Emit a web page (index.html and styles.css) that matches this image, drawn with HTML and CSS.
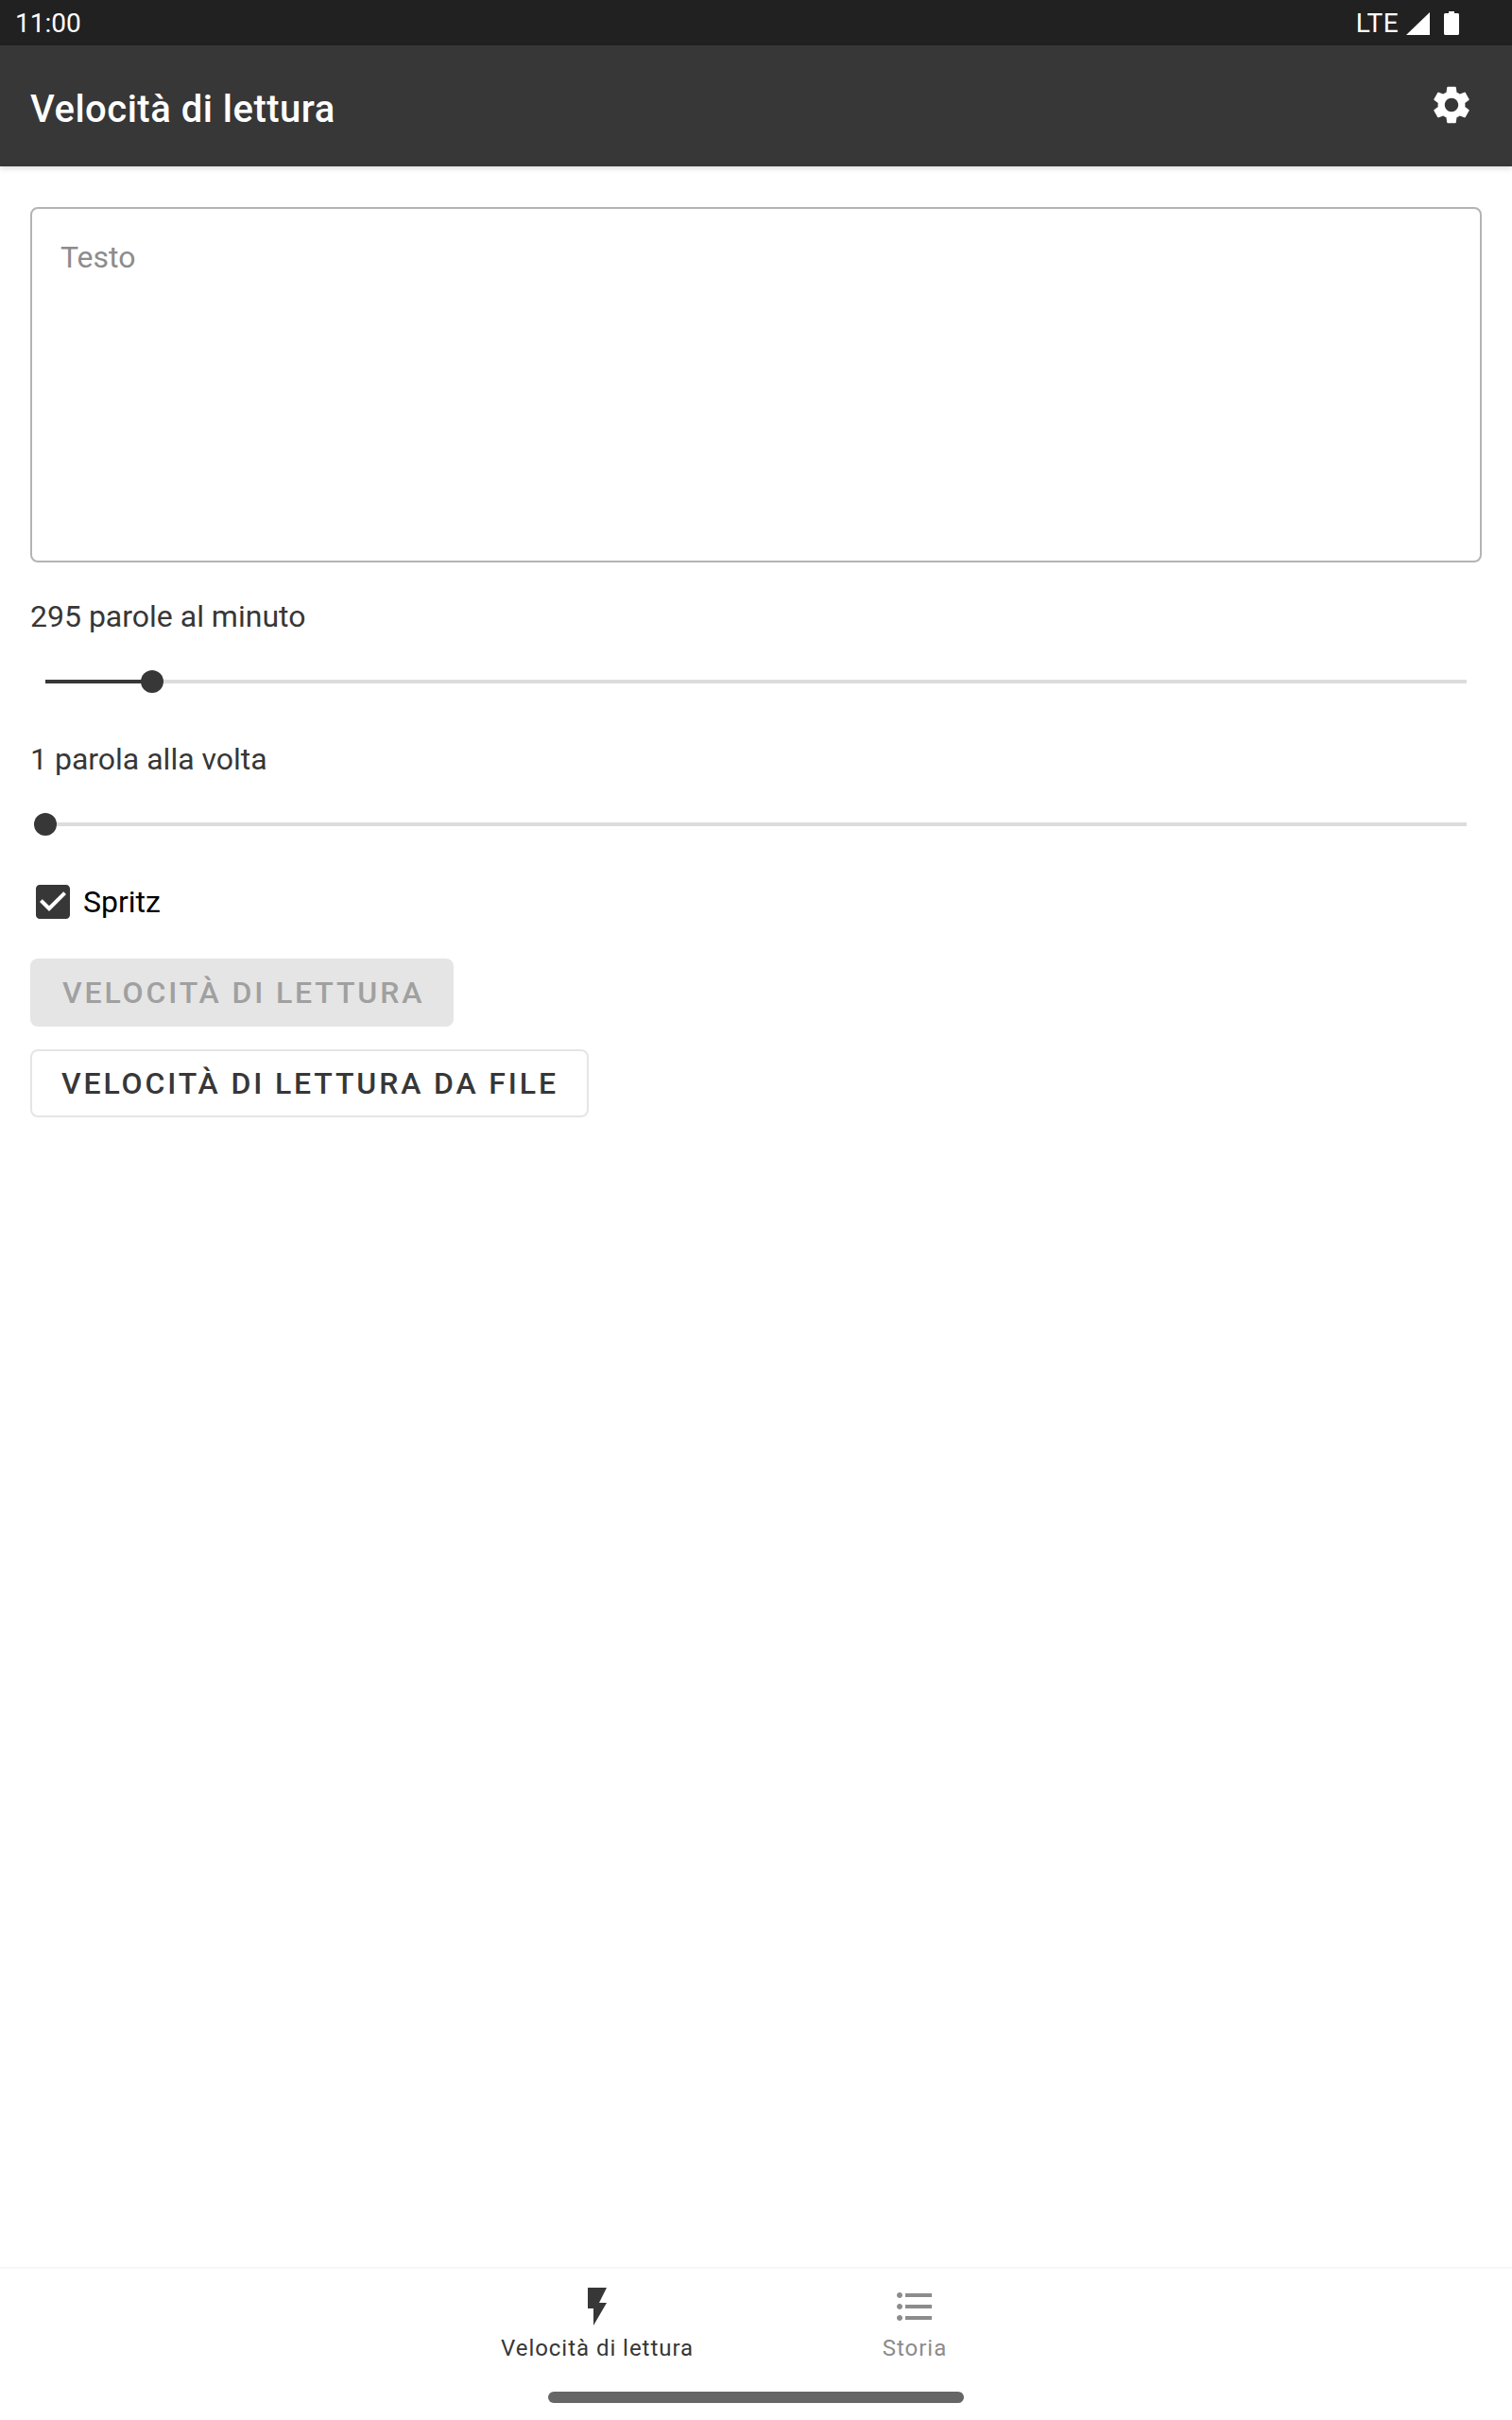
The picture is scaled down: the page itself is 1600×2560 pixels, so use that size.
FILE: index.html
```html
<!DOCTYPE html>
<html lang="it">
<head>
    <meta charset="UTF-8">
    <meta name="viewport" content="width=device-width, initial-scale=1.0">
    <title>Velocità di lettura</title>
    <link rel="stylesheet" href="styles.css">
</head>
<body>
    <div class="page">
        <div class="statusBar">
            <span class="clock">11:00</span>
            <div class="statusIcons">
                <span class="network">LTE</span>
                <svg class="signal" viewBox="0 0 25 24"><path d="M25 0v24H0z"/></svg>
                <svg class="battery" viewBox="0 0 16 25"><path d="M5 0h6v2h3.5c.8 0 1.5.7 1.5 1.5v20c0 .8-.7 1.5-1.5 1.5h-13C.7 25 0 24.300 0 23.500v-20C0 2.700.7 2 1.500 2H5z"/></svg>
            </div>
        </div>

        <header class="toolbar">
            <h1 class="toolbarTitle">Velocità di lettura</h1>
            <svg class="settingsIcon" viewBox="0 0 24 24"><path d="M19.140 12.940c.04-.3.060-.61.060-.94 0-.32-.020-.64-.070-.94l2.030-1.580c.18-.14.230-.41.120-.61l-1.920-3.320c-.12-.22-.37-.29-.59-.22l-2.390.96c-.5-.38-1.030-.7-1.620-.94l-.36-2.540c-.04-.24-.24-.41-.48-.41h-3.840c-.24 0-.43.17-.47.41l-.36 2.540c-.59.24-1.130.57-1.620.94l-2.390-.96c-.22-.08-.47 0-.59.22L2.740 8.870c-.12.21-.08.47.12.61l2.030 1.580c-.05.3-.09.63-.09.94s.02.64.07.94l-2.030 1.580c-.18.14-.23.41-.12.61l1.920 3.320c.12.22.37.29.59.22l2.390-.96c.5.38 1.030.7 1.620.94l.36 2.540c.05.24.24.41.48.41h3.840c.24 0 .44-.17.47-.41l.36-2.540c.59-.24 1.130-.56 1.620-.94l2.390.96c.22.080.47 0 .59-.22l1.920-3.320c.12-.22.070-.47-.12-.61l-2.010-1.580zM12 15.600c-1.980 0-3.600-1.620-3.600-3.600s1.620-3.600 3.600-3.600 3.600 1.620 3.600 3.600-1.620 3.600-3.600 3.600z"/></svg>
        </header>

        <main class="content">
            <div class="textInput">Testo</div>

            <div class="sliderLabel firstLabel">295 parole al minuto</div>
            <div class="slider">
                <div class="sliderFill" style="width: 113px"></div>
                <div class="sliderThumb"></div>
            </div>

            <div class="sliderLabel">1 parola alla volta</div>
            <div class="slider">
                <div class="sliderFill" style="width: 0"></div>
                <div class="sliderThumb"></div>
            </div>

            <div class="checkRow">
                <svg class="checkIcon" viewBox="0 0 24 24"><path d="M19 3H5c-1.110 0-2 .9-2 2v14c0 1.100.89 2 2 2h14c1.110 0 2-.9 2-2V5c0-1.100-.89-2-2-2zm-9 14l-5-5 1.410-1.410L10 14.170l7.590-7.590L19 8l-9 9z"/></svg>
                <span class="checkLabel">Spritz</span>
            </div>

            <div class="btn btnDisabled">VELOCITÀ DI LETTURA</div>
            <div class="btn btnOutline">VELOCITÀ DI LETTURA DA FILE</div>
        </main>

        <nav class="bottomNav">
            <div class="navItem navActive">
                <svg class="navIcon" viewBox="0 0 24 24"><path d="M7 2v11h3v9l7-12h-4l4-8z"/></svg>
                <span class="navLabel">Velocità di lettura</span>
            </div>
            <div class="navItem">
                <svg class="navIcon" viewBox="0 0 24 24"><path d="M4 10.500c-.83 0-1.500.67-1.500 1.500s.67 1.500 1.500 1.500 1.500-.67 1.500-1.500-.67-1.500-1.500-1.500zm0-6c-.83 0-1.500.67-1.500 1.500S3.170 7.500 4 7.500 5.500 6.830 5.500 6 4.830 4.500 4 4.500zm0 12c-.83 0-1.500.68-1.500 1.500s.68 1.500 1.500 1.500 1.500-.68 1.500-1.500-.67-1.500-1.500-1.500zM7 19h14v-2H7v2zm0-6h14v-2H7v2zm0-8v2h14V5H7z"/></svg>
                <span class="navLabel">Storia</span>
            </div>
        </nav>
        <div class="gestureArea">
            <div class="homeBar"></div>
        </div>
    </div>
</body>
</html>
```

FILE: styles.css
```css
* {
    box-sizing: border-box;
}

body {
    margin: 0;
    background-color: #fff;
    font-family: Roboto, "Liberation Sans", sans-serif;
}

.page {
    display: flex;
    flex-direction: column;
    height: 2560px;
}

.statusBar {
    height: 48px;
    padding: 1px 56px 0 16px;
    display: flex;
    align-items: center;
    justify-content: space-between;
    background-color: #212121;
    color: #fff;
    font-size: 28px;
}

.statusIcons {
    display: flex;
    align-items: center;
}

.network {
    margin-right: 8px;
    letter-spacing: 0.4px;
}

.signal {
    width: 25px;
    height: 24px;
    margin-right: 15px;
    fill: #fff;
}

.battery {
    width: 16px;
    height: 25px;
    fill: #fff;
}

.toolbar {
    height: 128px;
    padding: 0 40px 0 32px;
    display: flex;
    align-items: center;
    justify-content: space-between;
    background-color: #373737;
    box-shadow: 0 2px 6px rgba(0, 0, 0, 0.15);
}

.toolbarTitle {
    margin: 6px 0 0;
    color: #fff;
    font-size: 40px;
    font-weight: 500;
    letter-spacing: 0.5px;
}

.settingsIcon {
    width: 48px;
    height: 48px;
    margin-top: -2px;
    fill: #fff;
}

.content {
    flex: 1;
    padding: 43px 32px 0;
}

.textInput {
    height: 376px;
    padding: 32px 30px;
    border: 2px solid #b4b4b4;
    border-radius: 8px;
    color: #8c8c8c;
    font-size: 32px;
    line-height: 38px;
}

.sliderLabel {
    margin-top: 61px;
    color: #373737;
    font-size: 32px;
    line-height: 38px;
}

.firstLabel {
    margin-top: 38px;
}

.slider {
    height: 4px;
    margin: 48px 16px 0;
    display: flex;
    align-items: center;
    background-color: #dcdcdc;
}

.sliderFill {
    height: 4px;
    background-color: #373737;
}

.sliderThumb {
    width: 24px;
    height: 24px;
    margin-left: -12px;
    flex: none;
    border-radius: 50%;
    background-color: #373737;
}

.checkRow {
    margin-top: 56px;
    display: flex;
    align-items: center;
}

.checkIcon {
    width: 48px;
    height: 48px;
    fill: #373737;
}

.checkLabel {
    margin-left: 8px;
    color: #000;
    font-size: 32px;
}

.btn {
    width: fit-content;
    height: 72px;
    display: flex;
    align-items: center;
    border-radius: 8px;
    font-size: 32px;
    font-weight: 500;
    letter-spacing: 2.86px;
}

.btnDisabled {
    margin-top: 36px;
    padding: 0 31px 0 34px;
    background-color: #e5e5e5;
    color: #a0a0a0;
}

.btnOutline {
    margin-top: 24px;
    padding: 0 30px 0 31px;
    border: 2px solid #e5e5e5;
    color: #373737;
}

.bottomNav {
    height: 115px;
    padding-top: 16px;
    display: flex;
    justify-content: center;
    border-top: 2px solid #f7f7f7;
}

.navItem {
    width: 336px;
    display: flex;
    flex-direction: column;
    align-items: center;
    color: #8c8c8c;
    fill: #8c8c8c;
}

.navActive {
    color: #373737;
    fill: #373737;
}

.navIcon {
    width: 48px;
    height: 48px;
}

.navLabel {
    margin-top: 6px;
    font-size: 24px;
    line-height: 28px;
    letter-spacing: 0.96px;
}

.gestureArea {
    height: 47px;
    padding-top: 17px;
    display: flex;
    justify-content: center;
}

.homeBar {
    width: 440px;
    height: 12px;
    border-radius: 6px;
    background-color: #666;
}
```
